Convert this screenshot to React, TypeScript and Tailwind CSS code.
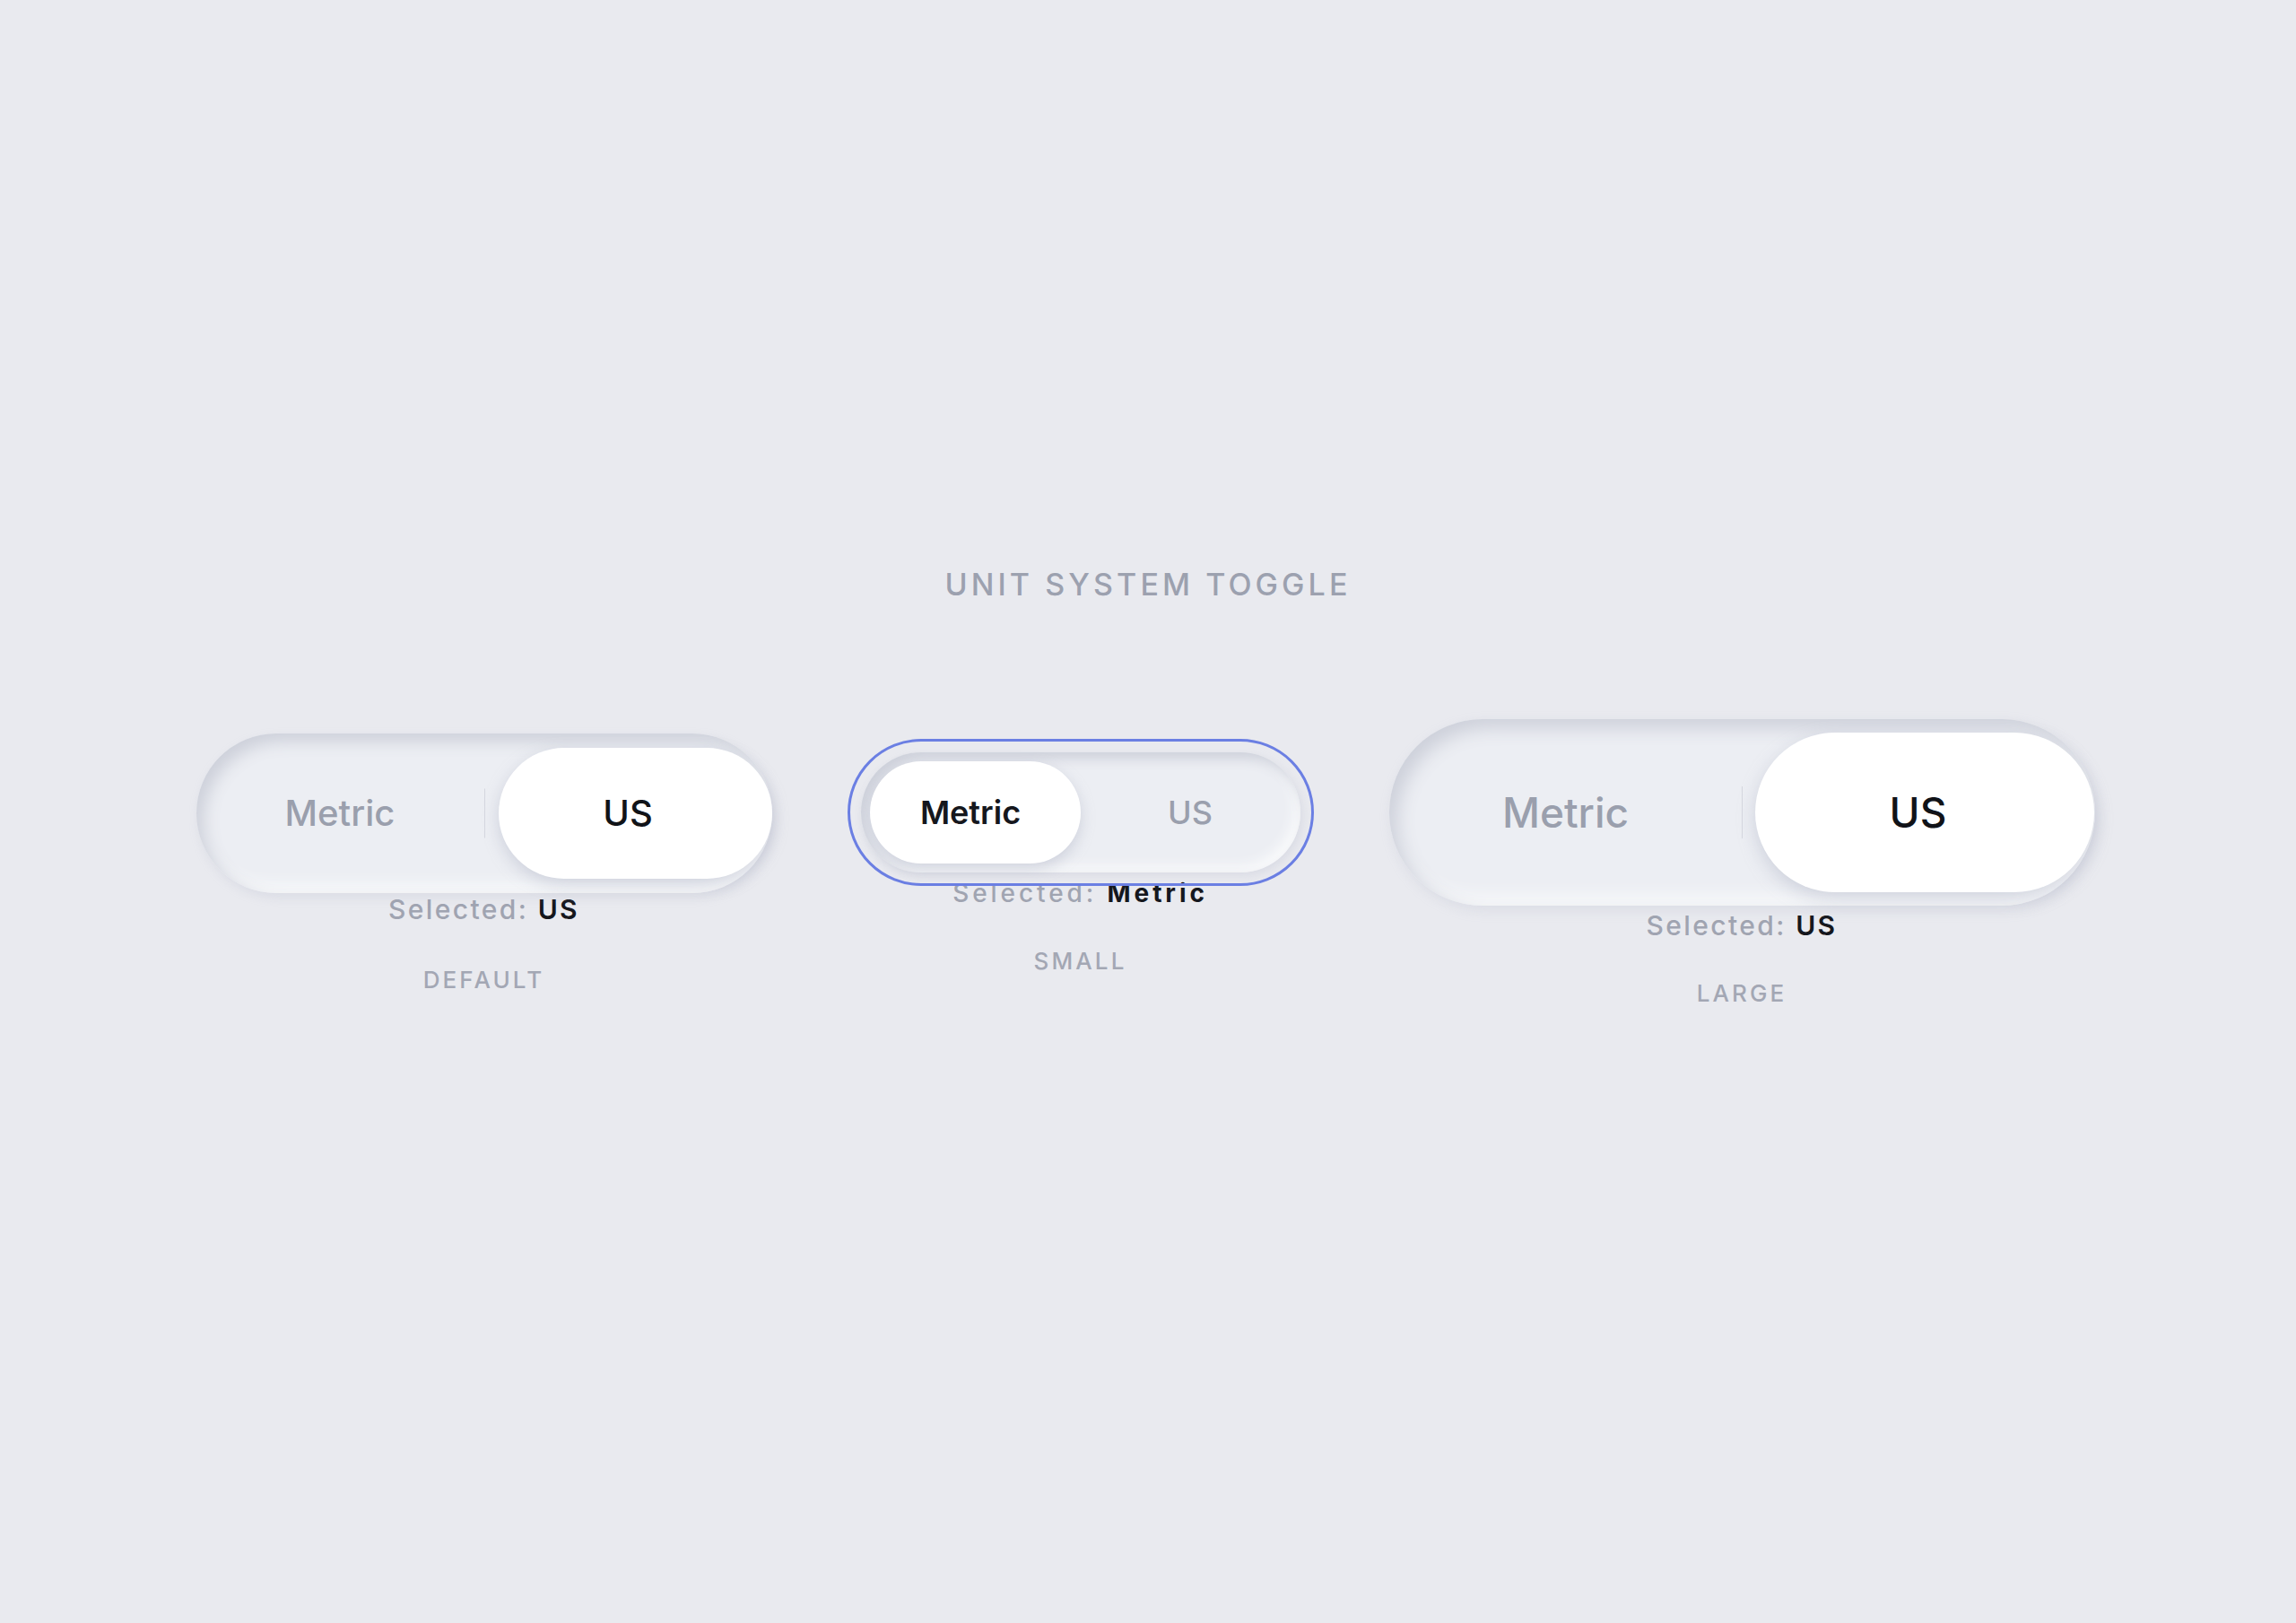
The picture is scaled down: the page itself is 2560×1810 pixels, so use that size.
import React from "react";

const font = { fontFamily: "Inter, 'Noto Sans', 'Liberation Sans', sans-serif" };

function DefaultToggle() {
  return (
    <div className="flex flex-col items-center">
      <div className="relative w-[642px] h-[178px] rounded-full bg-[#eceef3] shadow-[inset_8px_9px_18px_#cdd0da,inset_-8px_-8px_18px_#fafbfc,3px_5px_12px_rgba(170,175,195,0.22)]">
        <div className="absolute top-[16px] left-[16px] w-[305px] h-[146px] translate-x-[321px] rounded-full bg-white shadow-[0_6px_18px_rgba(150,155,178,0.35)]" />
        <div className="absolute left-1/2 top-1/2 -translate-y-1/2 w-px h-[55px] bg-[#d4d6de]" />
        <div className="relative z-10 flex h-full px-[8px] gap-[16px]">
          <div className="flex-1 flex items-center justify-center text-[40px] font-medium text-[#9a9fad]">Metric</div>
          <div className="flex-1 flex items-center justify-center text-[40px] font-medium text-[#111318]">US</div>
        </div>
      </div>
      <div className="leading-[36px] text-[30px] tracking-[0.08em] text-[#a0a4b1] font-medium">
        Selected: <span className="text-[#15171d] font-semibold">US</span>
      </div>
      <div className="mt-[43px] leading-[36px] text-[26px] tracking-[0.12em] text-[#a3a7b4] font-medium">DEFAULT</div>
    </div>
  );
}

function SmallToggle() {
  return (
    <div className="flex flex-col items-center">
      <div className="relative w-[490px] h-[134px] rounded-full bg-[#eceef3] shadow-[inset_6px_7px_14px_#cdd0da,inset_-6px_-6px_14px_#fafbfc,3px_4px_10px_rgba(170,175,195,0.22)] outline-[3px] outline-solid outline-[#6b7fe3] outline-offset-[12px]">
        <div className="absolute top-[10px] left-[10px] w-[235px] h-[114px] rounded-full bg-white shadow-[0_6px_16px_rgba(150,155,178,0.35)]" />
        <div className="relative z-10 flex h-full px-[5px] gap-[10px]">
          <div className="flex-1 flex items-center justify-center text-[36px] font-semibold text-[#15171d]">Metric</div>
          <div className="flex-1 flex items-center justify-center text-[36px] font-medium text-[#9a9fad]">US</div>
        </div>
      </div>
      <div className="mt-[5px] leading-[36px] text-[28px] tracking-[0.14em] text-[#a0a4b1] font-medium">
        Selected: <span className="text-[#15171d] font-bold">Metric</span>
      </div>
      <div className="mt-[40px] leading-[36px] text-[26px] tracking-[0.12em] text-[#a3a7b4] font-medium">SMALL</div>
    </div>
  );
}

function LargeToggle() {
  return (
    <div className="flex flex-col items-center">
      <div className="relative w-[787px] h-[208px] rounded-full bg-[#eceef3] shadow-[inset_9px_10px_20px_#cdd0da,inset_-9px_-9px_20px_#fafbfc,3px_5px_14px_rgba(170,175,195,0.22)]">
        <div className="absolute top-[15px] left-[15px] w-[378px] h-[178px] translate-x-[393px] rounded-full bg-white shadow-[0_7px_20px_rgba(150,155,178,0.35)]" />
        <div className="absolute left-1/2 top-1/2 -translate-y-1/2 w-px h-[58px] bg-[#d4d6de]" />
        <div className="relative z-10 flex h-full px-[8px] gap-[15px]">
          <div className="flex-1 flex items-center justify-center text-[46px] font-medium text-[#9a9fad]">Metric</div>
          <div className="flex-1 flex items-center justify-center text-[46px] font-medium text-[#111318]">US</div>
        </div>
      </div>
      <div className="mt-[4px] leading-[36px] text-[30px] tracking-[0.08em] text-[#a0a4b1] font-medium">
        Selected: <span className="text-[#15171d] font-semibold">US</span>
      </div>
      <div className="mt-[40px] leading-[36px] text-[26px] tracking-[0.12em] text-[#a3a7b4] font-medium">LARGE</div>
    </div>
  );
}

export default function App() {
  return (
    <div style={font} className="w-full min-h-[1810px] bg-[#e9eaef] flex flex-col items-center pt-[630px]">
      <div className="leading-[44px] text-[34px] font-medium tracking-[0.12em] text-[#9ca1af]">UNIT SYSTEM TOGGLE</div>
      <div className="mt-[128px] mr-[6px] flex items-center gap-[99px]">
        <DefaultToggle />
        <SmallToggle />
        <LargeToggle />
      </div>
    </div>
  );
}
